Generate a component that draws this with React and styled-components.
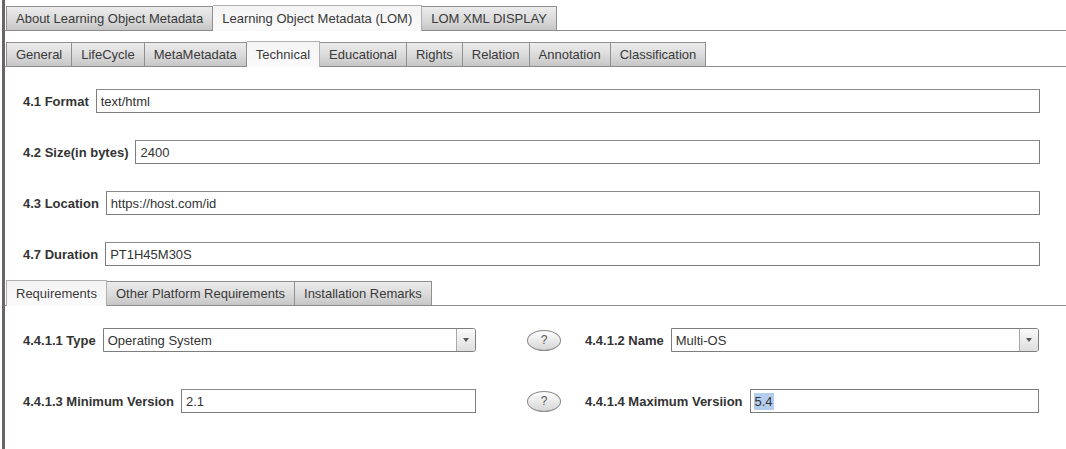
import React from "react";
import styled, { createGlobalStyle, css } from "styled-components";

const Global = createGlobalStyle`
  html, body { margin: 0; padding: 0; background: #ffffff; }
  body { font-family: "Liberation Sans", Arial, sans-serif; color: #333; }
  * { box-sizing: border-box; }
`;

const Frame = styled.div`
  margin-left: 2px;
  height: 449px;
  border-left: 3px solid #6b6666;
  display: flex;
  flex-direction: column;
  overflow: hidden;
`;

const TabBar = styled.div`
  display: flex;
  align-items: flex-end;
  height: 26px;
  margin-top: ${(p) => p.$top}px;
  padding-left: 1px;
  border-bottom: 1px solid #8c8c8c;
`;

const Tab = styled.div`
  height: 24px;
  padding: 0 9px;
  display: flex;
  align-items: center;
  font-size: 13px;
  color: #3a3a3a;
  white-space: nowrap;
  border: 1px solid #8f8f8f;
  border-bottom: none;
  border-left-width: 0;
  background: linear-gradient(#ececec 0%, #dadada 55%, #c6c6c6 100%);
  &:first-child { border-left-width: 1px; }
  ${(p) =>
    p.$active &&
    css`
      height: 26px;
      margin-bottom: -1px;
      background: linear-gradient(#f4f4f4, #fafafa);
      border-color: #b0b0b0;
      position: relative;
      z-index: 1;
    `}
`;

const Form = styled.div`
  display: flex;
  flex-direction: column;
  gap: 27px;
  padding: 22px 26px 14px 18px;
`;

const Row = styled.div`
  display: flex;
  align-items: center;
  gap: 7px;
  height: 24px;
`;

const Label = styled.label`
  font-size: 13px;
  font-weight: bold;
  color: #333;
  white-space: nowrap;
`;

const TextInput = styled.input`
  flex: 1;
  min-width: 0;
  height: 24px;
  border: 1px solid #7d7d7d;
  border-top-color: #8a8a8a;
  padding: 0 4px;
  font-family: "Liberation Sans", Arial, sans-serif;
  font-size: 13px;
  color: #333;
  background: #fff;
  outline: none;
`;

const TextBox = styled.div`
  flex: 1;
  height: 24px;
  border: 1px solid #7d7d7d;
  padding: 0 3px;
  display: flex;
  align-items: center;
  font-size: 13px;
  color: #333;
  background: #fff;
`;

const Selected = styled.span`
  background: #b3cdec;
  padding: 1px 1px;
`;

const ReqGrid = styled.div`
  display: grid;
  grid-template-columns: 453px 109px 1fr;
  row-gap: 37px;
  padding: 22px 27px 0 18px;
  align-items: center;
`;

const Select = styled.div`
  flex: 1;
  height: 24px;
  display: flex;
  border: 1px solid #7d7d7d;
  border-radius: 0 3px 3px 0;
  background: #fff;
  overflow: hidden;
`;

const SelectText = styled.div`
  flex: 1;
  padding: 0 4px;
  display: flex;
  align-items: center;
  font-size: 13px;
  color: #333;
`;

const DropButton = styled.div`
  width: 19px;
  border-left: 1px solid #a8a8a8;
  background: linear-gradient(#fafafa, #dedede);
  display: flex;
  align-items: center;
  justify-content: center;
  &::after {
    content: "";
    border-left: 3.5px solid transparent;
    border-right: 3.5px solid transparent;
    border-top: 4px solid #555;
  }
`;

const HelpButton = styled.button`
  justify-self: start;
  margin-left: 51px;
  width: 34px;
  height: 21px;
  border-radius: 50%;
  border: 1px solid #8a8a8a;
  background: linear-gradient(#ffffff, #e6e6e6 60%, #d6d6d6);
  font-family: "Liberation Sans", Arial, sans-serif;
  font-size: 12px;
  color: #555;
  padding: 0;
  display: flex;
  align-items: center;
  justify-content: center;
`;

const topTabs = ["About Learning Object Metadata", "Learning Object Metadata (LOM)", "LOM XML DISPLAY"];
const lomTabs = ["General", "LifeCycle", "MetaMetadata", "Technical", "Educational", "Rights", "Relation", "Annotation", "Classification"];
const reqTabs = ["Requirements", "Other Platform Requirements", "Installation Remarks"];

const fields = [
  ["4.1 Format", "text/html"],
  ["4.2 Size(in bytes)", "2400"],
  ["4.3 Location", "https://host.com/id"],
  ["4.7 Duration", "PT1H45M30S"],
];

function Tabs({ items, active, top }) {
  return (
    <TabBar $top={top}>
      {items.map((t) => (
        <Tab key={t} $active={t === active}>
          {t}
        </Tab>
      ))}
    </TabBar>
  );
}

export default function App() {
  return (
    <>
      <Global />
      <Frame>
        <Tabs items={topTabs} active="Learning Object Metadata (LOM)" top={5} />
        <Tabs items={lomTabs} active="Technical" top={10} />
        <Form>
          {fields.map(([label, value]) => (
            <Row key={label}>
              <Label>{label}</Label>
              <TextInput readOnly value={value} />
            </Row>
          ))}
        </Form>
        <Tabs items={reqTabs} active="Requirements" top={0} />
        <ReqGrid>
          <Row>
            <Label>4.4.1.1 Type</Label>
            <Select>
              <SelectText>Operating System</SelectText>
              <DropButton />
            </Select>
          </Row>
          <HelpButton>?</HelpButton>
          <Row>
            <Label>4.4.1.2 Name</Label>
            <Select>
              <SelectText>Multi-OS</SelectText>
              <DropButton />
            </Select>
          </Row>
          <Row>
            <Label>4.4.1.3 Minimum Version</Label>
            <TextInput readOnly value="2.1" />
          </Row>
          <HelpButton>?</HelpButton>
          <Row>
            <Label>4.4.1.4 Maximum Versiion</Label>
            <TextBox>
              <Selected>5.4</Selected>
            </TextBox>
          </Row>
        </ReqGrid>
      </Frame>
    </>
  );
}
